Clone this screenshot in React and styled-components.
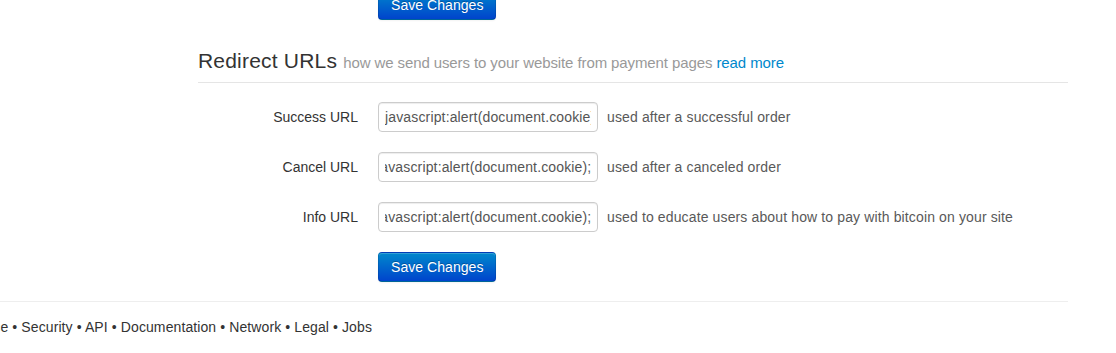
import React, { useEffect, useRef } from "react";
import styled, { createGlobalStyle } from "styled-components";

const GlobalStyle = createGlobalStyle`
  html, body {
    margin: 0;
    padding: 0;
    background: #ffffff;
    overflow: hidden;
  }
  body {
    font-family: "Liberation Sans", Arial, Helvetica, sans-serif;
    font-size: 14px;
    line-height: 20px;
    letter-spacing: 0.15px;
    color: #333333;
  }
`;

const URL_VALUE = "javascript:alert(document.cookie);";

const rows = [
  { label: "Success URL", help: "used after a successful order", scrollEnd: false },
  { label: "Cancel URL", help: "used after a canceled order", scrollEnd: true },
  { label: "Info URL", help: "used to educate users about how to pay with bitcoin on your site", scrollEnd: true },
];

const footerLinks = [
  "Blog",
  "About",
  "Careers",
  "Press",
  "Privacy",
  "Terms of Service",
  "Security",
  "API",
  "Documentation",
  "Network",
  "Legal",
  "Jobs",
];

function UrlField({ scrollEnd }) {
  const ref = useRef(null);
  useEffect(() => {
    if (scrollEnd && ref.current) {
      ref.current.scrollLeft = ref.current.scrollWidth;
    }
  }, [scrollEnd]);
  return <UrlInput ref={ref} type="text" defaultValue={URL_VALUE} />;
}

function App() {
  return (
    <>
      <GlobalStyle />
      <Page>
        <Content>
          <FormActions $first>
            <PrimaryButton type="button">Save Changes</PrimaryButton>
          </FormActions>

          <Legend>
            Redirect URLs{" "}
            <LegendSmall>
              how we send users to your website from payment pages{" "}
              <ReadMore href="#">read more</ReadMore>
            </LegendSmall>
          </Legend>

          {rows.map((row) => (
            <ControlGroup key={row.label}>
              <ControlLabel>{row.label}</ControlLabel>
              <Controls>
                <UrlField scrollEnd={row.scrollEnd} />
                <HelpInline>{row.help}</HelpInline>
              </Controls>
            </ControlGroup>
          ))}

          <FormActions>
            <PrimaryButton type="button">Save Changes</PrimaryButton>
          </FormActions>
        </Content>

        <Footer>
          <FooterNav>
            <FooterLine>
              {footerLinks.map((link, i) => (
                <React.Fragment key={link}>
                  {i > 0 && <Bullet> • </Bullet>}
                  <FooterLink href="#">{link}</FooterLink>
                </React.Fragment>
              ))}
            </FooterLine>
          </FooterNav>
        </Footer>
      </Page>
    </>
  );
}

const Page = styled.div`
  width: 1068px;
  display: flex;
  flex-direction: column;
`;

const Content = styled.div`
  margin-left: 198px;
  display: flex;
  flex-direction: column;
`;

const FormActions = styled.div`
  display: flex;
  height: 30px;
  padding-left: 180px;
  margin-top: ${(p) => (p.$first ? "-10px" : "0")};
  margin-bottom: ${(p) => (p.$first ? "22px" : "19px")};
`;

const PrimaryButton = styled.button`
  box-sizing: border-box;
  height: 30px;
  font-family: inherit;
  font-size: 14px;
  line-height: 20px;
  letter-spacing: 0.05px;
  padding: 4px 12px;
  color: #ffffff;
  text-shadow: 0 -1px 0 rgba(0, 0, 0, 0.25);
  background-color: #006dcc;
  background-image: linear-gradient(to bottom, #0088cc, #0044cc);
  border: 1px solid;
  border-color: rgba(0, 0, 0, 0.1) rgba(0, 0, 0, 0.1) rgba(0, 0, 0, 0.25);
  border-radius: 4px;
  box-shadow: inset 0 1px 0 rgba(255, 255, 255, 0.2), 0 1px 2px rgba(0, 0, 0, 0.05);
  cursor: pointer;
`;

const Legend = styled.div`
  height: 40px;
  font-size: 21px;
  line-height: 38px;
  letter-spacing: 0.2px;
  color: #333333;
  border-bottom: 1px solid #e5e5e5;
  margin-bottom: 19px;
  white-space: nowrap;
`;

const LegendSmall = styled.small`
  font-size: 15px;
  line-height: 1;
  letter-spacing: -0.1px;
  color: #999999;
`;

const ReadMore = styled.a`
  color: #0088cc;
  text-decoration: none;
`;

const ControlGroup = styled.div`
  display: flex;
  align-items: flex-start;
  margin-bottom: 20px;
`;

const ControlLabel = styled.label`
  width: 160px;
  padding-top: 5px;
  text-align: right;
  letter-spacing: 0;
  color: #333333;
`;

const Controls = styled.div`
  margin-left: 20px;
  display: flex;
  align-items: center;
`;

const UrlInput = styled.input`
  box-sizing: content-box;
  width: 206px;
  height: 20px;
  padding: 4px 6px;
  font-family: inherit;
  font-size: 14px;
  line-height: 20px;
  letter-spacing: 0.15px;
  color: #555555;
  background: #ffffff;
  border: 1px solid #cccccc;
  border-radius: 4px;
  box-shadow: inset 0 1px 1px rgba(0, 0, 0, 0.075);
  outline: none;
`;

const HelpInline = styled.span`
  padding-left: 9px;
  letter-spacing: 0.13px;
  color: #595959;
  white-space: nowrap;
`;

const Footer = styled.div`
  border-top: 1px solid #eeeeee;
  padding-top: 15px;
`;

const FooterNav = styled.div`
  width: 372px;
  display: flex;
  justify-content: flex-end;
  overflow: hidden;
`;

const FooterLine = styled.div`
  white-space: nowrap;
  flex-shrink: 0;
  letter-spacing: 0.1px;
`;

const Bullet = styled.span`
  color: #333333;
`;

const FooterLink = styled.a`
  color: #333333;
  text-decoration: none;
`;

export default App;
